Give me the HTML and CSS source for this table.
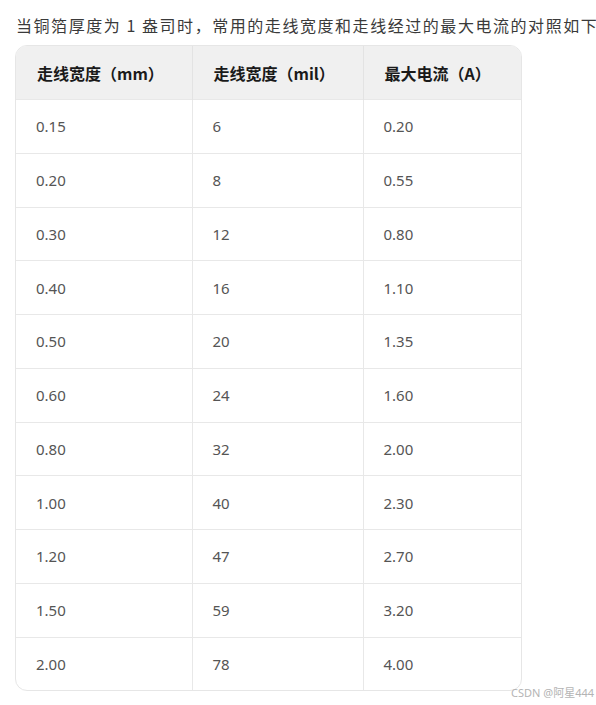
FILE: index.html
```html
<!DOCTYPE html>
<html lang="zh-CN">
<head>
<meta charset="utf-8">
<link rel="stylesheet" href="styles.css">
</head>
<body>
<div class="page">
  <p class="intro">当铜箔厚度为 1 盎司时，常用的走线宽度和走线经过的最大电流的对照如下</p>
  <div class="table-wrap">
    <table class="grid">
      <colgroup><col class="c1"><col class="c2"><col class="c3"></colgroup>
      <thead>
        <tr><th>走线宽度（mm）</th><th>走线宽度（mil）</th><th>最大电流（A）</th></tr>
      </thead>
      <tbody>
        <tr><td>0.15</td><td>6</td><td>0.20</td></tr>
        <tr><td>0.20</td><td>8</td><td>0.55</td></tr>
        <tr><td>0.30</td><td>12</td><td>0.80</td></tr>
        <tr><td>0.40</td><td>16</td><td>1.10</td></tr>
        <tr><td>0.50</td><td>20</td><td>1.35</td></tr>
        <tr><td>0.60</td><td>24</td><td>1.60</td></tr>
        <tr><td>0.80</td><td>32</td><td>2.00</td></tr>
        <tr><td>1.00</td><td>40</td><td>2.30</td></tr>
        <tr><td>1.20</td><td>47</td><td>2.70</td></tr>
        <tr><td>1.50</td><td>59</td><td>3.20</td></tr>
        <tr><td>2.00</td><td>78</td><td>4.00</td></tr>
      </tbody>
    </table>
  </div>
  <div class="watermark">CSDN @阿星444</div>
</div>
</body>
</html>
```
FILE: styles.css
```css
html, body {
  margin: 0;
  padding: 0;
  background: #ffffff;
  overflow: hidden;
}
.page {
  width: 596px;
  height: 705px;
  position: relative;
  font-family: "Noto Sans", "Noto Sans CJK SC", sans-serif;
  color: #333333;
}
.intro {
  margin: 0;
  padding: 13px 0 0 16px;
  font-size: 16px;
  line-height: 24px;
  white-space: nowrap;
  font-family: "Noto Sans CJK SC", sans-serif;
  color: #3a3a3a;
  letter-spacing: 1.55px;
}
.table-wrap {
  margin: 8px 0 0 15px;
  width: 505px;
  border: 1px solid #e6e6e6;
  border-radius: 12px;
  overflow: hidden;
}
.grid {
  width: 100%;
  border-collapse: collapse;
  table-layout: fixed;
}
.c1 { width: 176px; }
.c2 { width: 171px; }
.c3 { width: auto; }
.grid th {
  background: #f0f0f0;
  font-family: "Noto Sans CJK SC", sans-serif;
  font-weight: 700;
  font-size: 16px;
  color: #1a1a1a;
  text-align: left;
  height: 53px;
  padding: 0 0 0 21px;
  border-right: 1px solid #e3e3e3;
}
.grid td {
  font-size: 15px;
  font-weight: 400;
  color: #555555;
  height: 52.75px;
  padding: 0 0 0 20px;
  border-top: 1px solid #e8e8e8;
  border-right: 1px solid #e8e8e8;
}
.grid th:last-child, .grid td:last-child {
  border-right: none;
}
.watermark {
  position: absolute;
  left: 511px;
  top: 686px;
  font-size: 11px;
  line-height: 14px;
  color: #b4b4b4;
  font-family: "Noto Sans", "Noto Sans CJK SC", sans-serif;
}
```
